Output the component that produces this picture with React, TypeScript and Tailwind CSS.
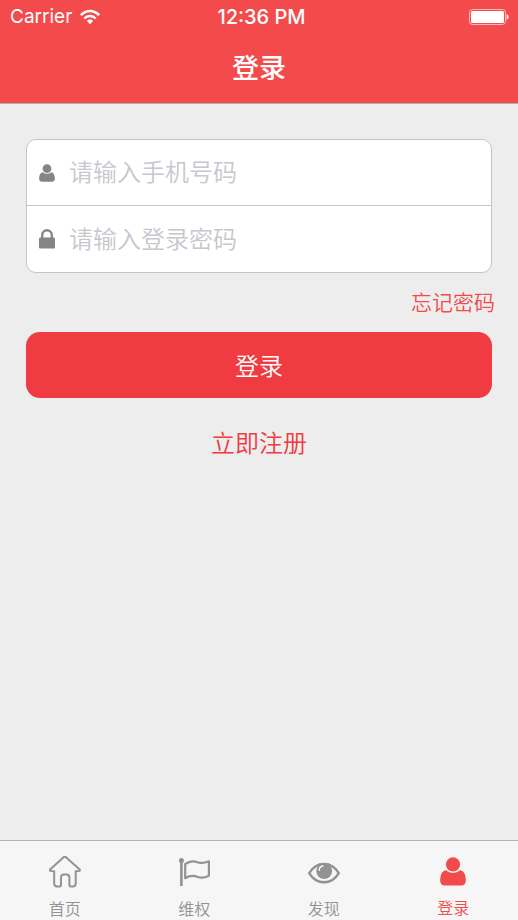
import type { ReactNode } from "react";

function WifiIcon() {
  return (
    <svg className="h-4 w-5" viewBox="0 0 20 16" fill="none" stroke="white" aria-hidden="true">
      <path d="M0.9 6.2 C6 0.6 14 0.6 19.1 6.2" strokeWidth="2.5" />
      <path d="M4.3 9.5 C7.5 6.1 12.5 6.1 15.7 9.5" strokeWidth="2.4" />
      <path d="M6.9 12 C8.7 10.1 11.3 10.1 13.1 12 L10 15.2 Z" fill="white" stroke="none" />
    </svg>
  );
}

function BatteryIcon() {
  return (
    <svg className="h-4 w-10" viewBox="0 0 40 16" fill="none" aria-hidden="true">
      <rect x="0.5" y="0.5" width="36" height="15" rx="3" stroke="white" strokeOpacity="0.6" strokeWidth="1" />
      <rect x="2" y="2" width="33" height="12" rx="1.5" fill="white" />
      <path d="M37.6 5.3 C40.2 5.8 40.2 10.2 37.6 10.7 Z" fill="white" />
    </svg>
  );
}

function PersonIcon({ className }: { className: string }) {
  return (
    <svg className={className} viewBox="0 0 26 29" fill="currentColor" aria-hidden="true">
      <circle cx="13" cy="7.4" r="7.1" />
      <path d="M6.2 13.2 C2.2 13.6 0.2 17.5 0.2 23.8 C0.2 26.8 2 28.6 4.8 28.6 H21.2 C24 28.6 25.8 26.8 25.8 23.8 C25.8 17.5 23.8 13.6 19.8 13.2 C15.8 16.7 10.2 16.7 6.2 13.2 Z" />
    </svg>
  );
}

function LockIcon() {
  return (
    <svg className="h-5 w-4" viewBox="0 0 16 20" fill="none" aria-hidden="true">
      <path d="M3.2 9.5 V6.2 C3.2 -0.4 12.8 -0.4 12.8 6.2 V9.5" stroke="#858585" strokeWidth="2.3" />
      <rect x="0" y="8.6" width="16" height="10.8" rx="1.2" fill="#858585" />
    </svg>
  );
}

function HomeIcon() {
  return (
    <svg className="size-8" viewBox="0 0 32 32" fill="none" stroke="currentColor" strokeWidth="2" strokeLinejoin="round" aria-hidden="true">
      <path d="M14.3 1.4 Q15.8 0.1 17.3 1.4 L30.4 13.2 Q31.2 14 30.7 14.8 Q30.2 15.2 26.7 15.2 V27.6 Q26.7 30.6 23.7 30.6 H22.2 Q20.4 30.6 20.4 28.8 V21.4 Q20.4 18.6 17.6 18.6 H14.8 Q12 18.6 12 21.4 V28.8 Q12 30.6 10.2 30.6 H8.2 Q5.2 30.6 5.2 27.6 V15.2 Q1.6 15.2 1.2 14.8 Q0.6 14 1.4 13.2 Z" />
    </svg>
  );
}

function FlagIcon() {
  return (
    <svg className="size-8" viewBox="0 0 32 32" fill="none" stroke="currentColor" strokeWidth="2.2" strokeLinejoin="round" aria-hidden="true">
      <circle cx="3.4" cy="4.4" r="2.5" fill="currentColor" stroke="none" />
      <path d="M3.4 4.5 V30" strokeWidth="2.6" />
      <path d="M7.2 8 C13 4.4 16.2 5.2 20.3 6.5 C24.2 7.7 27.2 6.8 30.9 5.3 V19.7 C27.5 21.4 24.1 22.6 19.8 21 C15.7 19.4 12.3 19.1 7.2 22.2 Z" />
    </svg>
  );
}

function EyeIcon() {
  return (
    <svg className="size-8" viewBox="0 0 32 32" fill="none" aria-hidden="true">
      <path d="M1.2 17.1 C8.5 4.9 23.5 4.9 30.8 17.1 C23.5 29.3 8.5 29.3 1.2 17.1 Z" stroke="currentColor" strokeWidth="2.4" strokeLinejoin="round" />
      <circle cx="16.2" cy="15.2" r="7.9" fill="currentColor" />
      <path d="M11.2 14.4 C11.2 12 12.6 10.3 14.9 10" stroke="#f6f6f6" strokeWidth="1.4" strokeLinecap="round" />
    </svg>
  );
}

function Field({ id, label, type, icon }: { id: string; label: string; type: string; icon: ReactNode }) {
  return (
    <div className="flex h-[66px] items-center pl-3">
      <label htmlFor={id} aria-label={label} className="flex w-[30px] shrink-0 items-center text-[#858585]">
        {icon}
      </label>
      <input
        id={id}
        type={type}
        placeholder={label}
        className="h-full min-w-0 flex-1 bg-transparent text-2xl font-[350] text-gray-800 outline-none placeholder:text-[#c7c7cd]"
      />
    </div>
  );
}

function Tab({ label, icon, active = false }: { label: string; icon: ReactNode; active?: boolean }) {
  return (
    <a
      href="#"
      aria-current={active ? "page" : undefined}
      className={`flex flex-1 flex-col items-center gap-[9px] text-base font-[350] ${active ? "text-[#f34b4b]" : "text-[#929292]"}`}
    >
      <span className="flex size-8 items-center justify-center">{icon}</span>
      <span>{label}</span>
    </a>
  );
}

export default function App() {
  return (
    <div className="flex min-h-screen flex-col bg-[#ededed] font-['Inter','Noto_Sans_CJK_SC',sans-serif]">
      <header className="border-b border-[#b7abae] bg-[#f34b4b] text-white">
        <div className="grid h-[34px] grid-cols-[1fr_auto_1fr] items-center pr-[9px] pl-[10px] text-[19px] leading-8">
          <div className="flex items-center gap-2">
            <span>Carrier</span>
            <WifiIcon />
          </div>
          <span className="pl-1 text-xl leading-8 font-medium">12:36 PM</span>
          <div className="flex justify-end">
            <BatteryIcon />
          </div>
        </div>
        <h1 className="h-[69px] text-center text-[27px] leading-[69px] font-medium">登录</h1>
      </header>

      <main className="flex-1 px-[26px] pt-[35px]">
        <form onSubmit={(event) => event.preventDefault()}>
          <div className="divide-y divide-[#c4c4c4] rounded-[10px] border border-[#c4c4c4] bg-white">
            <Field id="phone" label="请输入手机号码" type="tel" icon={<PersonIcon className="h-[18px] w-4" />} />
            <Field id="password" label="请输入登录密码" type="password" icon={<LockIcon />} />
          </div>
          <div className="-mr-[3px] flex h-[59px] items-center justify-end">
            <a href="#" className="text-[21px] font-[350] text-[#f34b4b]">忘记密码</a>
          </div>
          <button type="submit" className="h-[66px] w-full rounded-[14px] bg-[#ef3b41] pt-1 text-2xl font-[350] text-white">
            登录
          </button>
        </form>
        <div className="mt-[30px] text-center">
          <a href="#" className="text-2xl font-[350] text-[#ef3b41]">立即注册</a>
        </div>
      </main>

      <nav className="flex h-20 border-t border-[#b4b4b4] bg-[#f6f6f6] pt-[15px]">
        <Tab label="首页" icon={<HomeIcon />} />
        <Tab label="维权" icon={<FlagIcon />} />
        <Tab label="发现" icon={<EyeIcon />} />
        <Tab label="登录" icon={<PersonIcon className="h-[29px] w-[26px]" />} active />
      </nav>
    </div>
  );
}
